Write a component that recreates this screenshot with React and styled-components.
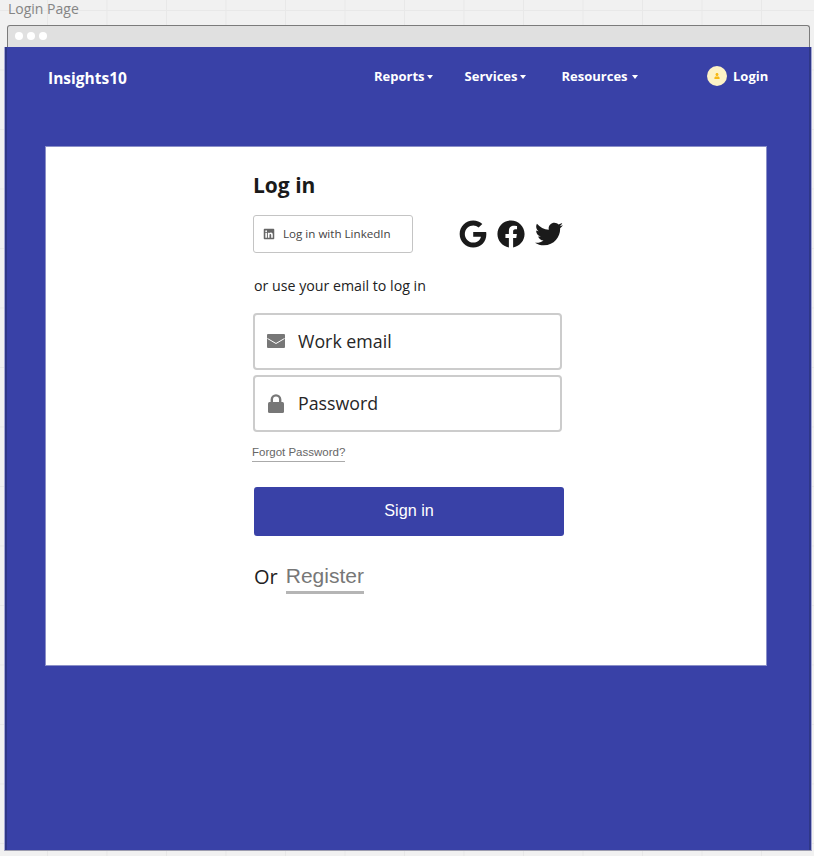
import React from 'react'
import styled, { createGlobalStyle } from 'styled-components'
import { FaGoogle, FaFacebook, FaTwitter, FaLinkedin, FaUser } from 'react-icons/fa'

const GlobalStyle = createGlobalStyle`
  html, body {
    margin: 0;
    padding: 0;
    height: 856px;
    overflow: hidden;
    background-color: #f1f1f1;
    background-image:
      linear-gradient(#e8e8e8 1px, transparent 1px),
      linear-gradient(90deg, #e8e8e8 1px, transparent 1px);
    background-size: 59.5px 59.5px;
    background-position: 47px 10px;
    font-family: "Open Sans", sans-serif;
  }
`

const Canvas = styled.div`
  width: 814px;
  height: 856px;
  display: flex;
  flex-direction: column;
`

const Caption = styled.div`
  height: 25px;
  padding-left: 8px;
  font-size: 14px;
  line-height: 17px;
  color: #858585;
`

const WindowBar = styled.div`
  box-sizing: border-box;
  margin-left: 7px;
  width: 803px;
  height: 22px;
  padding: 0 0 2px 7px;
  display: flex;
  align-items: center;
  gap: 4px;
  background: #e0e0e0;
  border: 1px solid #7b7b7b;
  border-bottom: 0;
  border-radius: 3px 3px 0 0;
`

const Dot = styled.span`
  width: 8px;
  height: 8px;
  border-radius: 50%;
  background: #fff;
`

const Screen = styled.div`
  box-sizing: border-box;
  margin-left: 4px;
  width: 808px;
  height: 804px;
  background: #3941a7;
  border-left: 1px solid #a5a8d6;
  border-right: 1px solid #a5a8d6;
  border-bottom: 1px solid #9c9cae;
  box-shadow: inset 2px 0 #2f3787, inset -2px 0 #2f3787;
  display: flex;
  flex-direction: column;
`

const Nav = styled.nav`
  box-sizing: border-box;
  height: 99px;
  padding: 18px 42px 0 43px;
  display: flex;
  align-items: flex-start;
  color: #fff;
  font-weight: 700;
`

const Brand = styled.div`
  font-size: 15.5px;
  line-height: 26px;
  width: 326px;
`

const Menu = styled.div`
  display: flex;
  width: 333px;
`

const MenuItem = styled.div`
  display: flex;
  align-items: center;
  font-size: 13px;
  line-height: 22px;
  gap: ${(p) => p.$gap}px;
  margin-right: ${(p) => p.$after}px;
`

const Caret = styled.span`
  width: 0;
  height: 0;
  margin-top: 2px;
  border-left: 3.5px solid transparent;
  border-right: 3.5px solid transparent;
  border-top: 4px solid #fff;
`

const LoginLink = styled.div`
  display: flex;
  align-items: center;
  gap: 6px;
  font-size: 13px;
  line-height: 22px;
`

const Avatar = styled.span`
  width: 20px;
  height: 20px;
  border-radius: 50%;
  background: #fdf2c6;
  color: #f7b916;
  display: flex;
  align-items: center;
  justify-content: center;
  font-size: 6px;
`

const Card = styled.section`
  box-sizing: border-box;
  margin-left: 40px;
  width: 722px;
  height: 520px;
  background: #fff;
  border: 1px solid #8b90c8;
  padding: 24px 0 0 207px;
`

const Form = styled.div`
  width: 312px;
  display: flex;
  flex-direction: column;
  align-items: flex-start;
`

const Title = styled.h1`
  margin: 0;
  font-size: 21px;
  line-height: 29px;
  font-weight: 700;
  color: #1a1a1a;
`

const SocialRow = styled.div`
  margin-top: 15px;
  display: flex;
  align-items: center;
`

const LinkedInButton = styled.div`
  box-sizing: border-box;
  width: 160px;
  height: 38px;
  border: 1px solid #c4c4c4;
  border-radius: 3px;
  display: flex;
  align-items: center;
  gap: 8px;
  padding: 0 0 1px 9px;
  font-size: 11.6px;
  color: #444;
`

const LinkedInIcon = styled(FaLinkedin)`
  width: 12px;
  height: 12px;
  color: #666;
`

const SocialIcons = styled.div`
  margin-left: 46px;
  display: flex;
  align-items: center;
  gap: 10px;
  color: #1a1a1a;
  font-size: 28px;
`

const Hint = styled.p`
  margin: 23px 0 0 1px;
  font-size: 14.2px;
  line-height: 20px;
  color: #222;
`

const Field = styled.div`
  box-sizing: border-box;
  width: 309px;
  height: 57px;
  margin-top: ${(p) => p.$top}px;
  padding-bottom: 1px;
  border: 2px solid #ccc;
  border-radius: 4px;
  display: flex;
  align-items: center;
  font-size: 17.8px;
  color: #262626;
`

const IconSlot = styled.span`
  width: 43px;
  padding-left: ${(p) => p.$left}px;
  box-sizing: border-box;
  display: flex;
`

const Forgot = styled.a`
  margin: 13px 0 0 -1px;
  padding-bottom: 1px;
  font-family: "Liberation Sans", Arial, sans-serif;
  font-size: 11.5px;
  line-height: 15px;
  color: #666;
  border-bottom: 1px solid #aaa;
`

const SignIn = styled.button`
  margin: 25px 0 0 1px;
  padding: 0 0 2px;
  width: 310px;
  height: 49px;
  border: 0;
  border-radius: 3px;
  background: #3941a7;
  color: #fff;
  font-family: "Liberation Sans", Arial, sans-serif;
  font-size: 16.2px;
`

const RegisterRow = styled.div`
  margin-top: 26px;
  display: flex;
  align-items: flex-start;
  gap: 8px;
`

const OrText = styled.span`
  font-family: "Open Sans", sans-serif;
  font-size: 20px;
  line-height: 30px;
  color: #222;
  margin-left: 1px;
`

const RegisterLink = styled.a`
  font-family: "Liberation Sans", Arial, sans-serif;
  font-size: 21px;
  line-height: 28px;
  color: #777;
  border-bottom: 3px solid #b5b5b5;
  padding-bottom: 1px;
`

const MailIcon = () => (
  <svg width="18" height="14" viewBox="0 0 18 14">
    <rect width="18" height="14" rx="1" fill="#777" />
    <path d="M0.5 4.5 L9 9.5 L17.5 4.5" fill="none" stroke="#fff" strokeWidth="1" />
  </svg>
)

const LockIcon = () => (
  <svg width="16" height="19" viewBox="0 0 16 19">
    <path d="M3.8 9 V5.6 a4.2 4.2 0 0 1 8.4 0 V9" fill="none" stroke="#777" strokeWidth="2.4" />
    <rect y="8" width="16" height="11" rx="1.5" fill="#777" />
  </svg>
)

const App = () => {
  return (
    <Canvas>
      <GlobalStyle />
      <Caption>Login Page</Caption>
      <WindowBar>
        <Dot />
        <Dot />
        <Dot />
      </WindowBar>
      <Screen>
        <Nav>
          <Brand>Insights10</Brand>
          <Menu>
            <MenuItem $gap={2} $after={32}>Reports<Caret /></MenuItem>
            <MenuItem $gap={3} $after={35}>Services<Caret /></MenuItem>
            <MenuItem $gap={4} $after={0}>Resources<Caret /></MenuItem>
          </Menu>
          <LoginLink>
            <Avatar><FaUser /></Avatar>
            Login
          </LoginLink>
        </Nav>
        <Card>
          <Form>
            <Title>Log in</Title>
            <SocialRow>
              <LinkedInButton>
                <LinkedInIcon />
                Log in with LinkedIn
              </LinkedInButton>
              <SocialIcons>
                <FaGoogle />
                <FaFacebook />
                <FaTwitter />
              </SocialIcons>
            </SocialRow>
            <Hint>or use your email to log in</Hint>
            <Field $top={17}>
              <IconSlot $left={12}><MailIcon /></IconSlot>
              Work email
            </Field>
            <Field $top={5}>
              <IconSlot $left={13}><LockIcon /></IconSlot>
              Password
            </Field>
            <Forgot>Forgot Password?</Forgot>
            <SignIn>Sign in</SignIn>
            <RegisterRow>
              <OrText>Or</OrText>
              <RegisterLink>Register</RegisterLink>
            </RegisterRow>
          </Form>
        </Card>
      </Screen>
    </Canvas>
  )
}

export default App
